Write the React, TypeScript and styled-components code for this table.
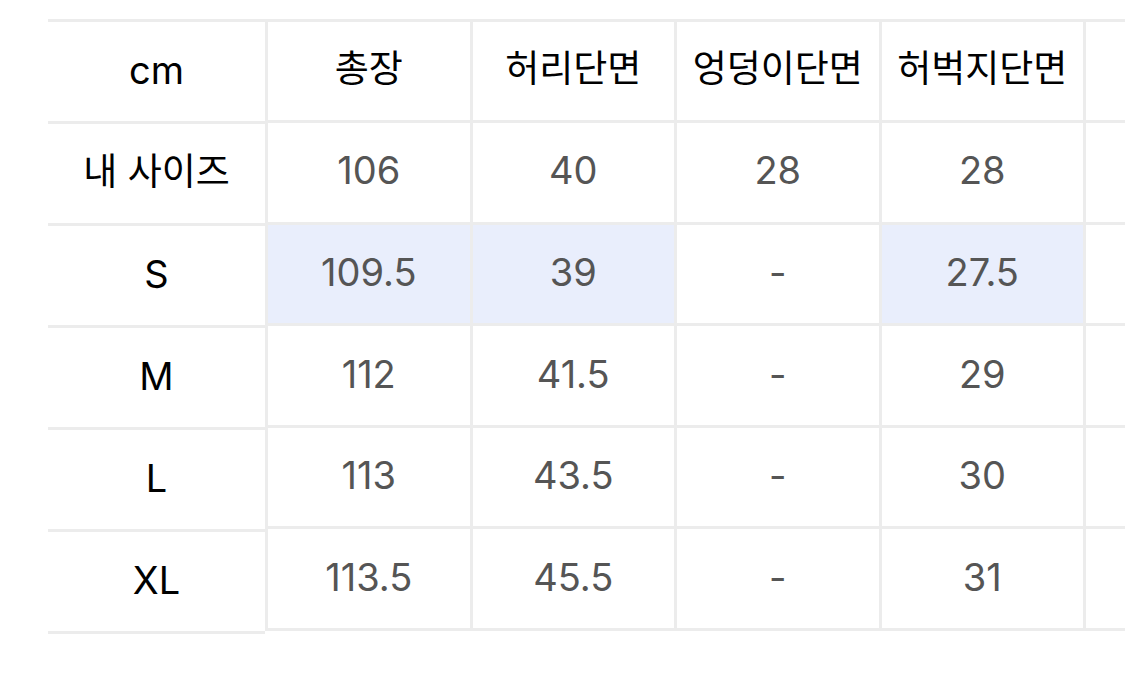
import React from "react";
import styled, { createGlobalStyle } from "styled-components";

const GlobalStyle = createGlobalStyle`
  html, body {
    margin: 0;
    padding: 0;
    background: #ffffff;
  }
  body {
    font-family: Inter, "Noto Sans CJK KR", sans-serif;
  }
`;

const BORDER = "#ececec";

const Page = styled.div`
  width: 1125px;
  height: 698px;
  overflow: hidden;
  background: #ffffff;
  display: flex;
  align-items: flex-start;
  padding: 19px 0 0 48px;
  box-sizing: border-box;
`;

const LeftColumn = styled.div`
  flex: none;
  width: 217px;
  display: grid;
  grid-auto-rows: 102px;
  border-bottom: 3px solid ${BORDER};
`;

const ScrollArea = styled.div`
  flex: 1;
  overflow: hidden;
  display: grid;
  grid-template-columns: repeat(6, 204.5px);
  grid-auto-rows: 101.6px;
  margin-top: -0.5px;
  border-bottom: 3px solid ${BORDER};
`;

const Cell = styled.div<{ $head?: boolean; $hl?: boolean; $side?: boolean; $kr?: boolean }>`
  box-sizing: border-box;
  display: flex;
  align-items: center;
  justify-content: center;
  padding-bottom: 4px;
  border-top: 3px solid ${BORDER};
  border-left: ${(p) => (p.$side ? "none" : `3px solid ${BORDER}`)};
  background: ${(p) => (p.$hl ? "#e9eefc" : "#ffffff")};
  font-size: ${(p) => (p.$kr ? "37px" : "38px")};
  line-height: 1;
  white-space: nowrap;
  color: ${(p) => (p.$head ? "#000000" : "#555555")};
  font-weight: 400;
`;

const headers = ["총장", "허리단면", "엉덩이단면", "허벅지단면", "", ""];
const rowLabels = ["내 사이즈", "S", "M", "L", "XL"];
const data: string[][] = [
  ["106", "40", "28", "28", "", ""],
  ["109.5", "39", "-", "27.5", "", ""],
  ["112", "41.5", "-", "29", "", ""],
  ["113", "43.5", "-", "30", "", ""],
  ["113.5", "45.5", "-", "31", "", ""],
];
const highlighted: Record<string, boolean> = { "1-0": true, "1-1": true, "1-3": true };
const isKorean = (s: string) => /[\uac00-\ud7a3]/.test(s);

export default function App() {
  return (
    <>
      <GlobalStyle />
      <Page>
        <LeftColumn>
          <Cell $side $head>cm</Cell>
          {rowLabels.map((l) => (
            <Cell key={l} $side $head $kr={isKorean(l)}>
              {l}
            </Cell>
          ))}
        </LeftColumn>
        <ScrollArea>
          {headers.map((h, i) => (
            <Cell key={"h" + i} $head $kr={isKorean(h)}>
              {h}
            </Cell>
          ))}
          {data.map((row, r) =>
            row.map((v, c) => (
              <Cell key={r + "-" + c} $hl={!!highlighted[r + "-" + c]}>
                {v}
              </Cell>
            ))
          )}
        </ScrollArea>
      </Page>
    </>
  );
}
